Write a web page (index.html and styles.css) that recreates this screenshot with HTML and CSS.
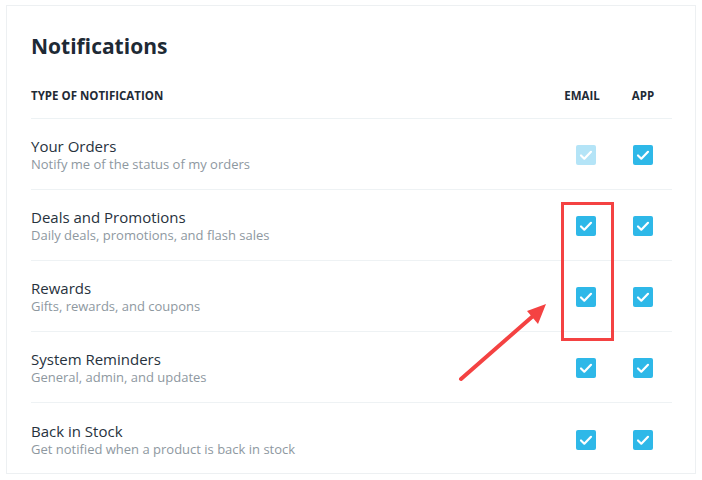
FILE: index.html
```html
<!DOCTYPE html>
<html>
<head>
<meta charset="utf-8">
<link rel="stylesheet" href="styles.css">
</head>
<body>
<div class="card">
  <h1 class="title">Notifications</h1>
  <div class="table">
    <div class="row head">
      <div class="col-type">TYPE OF NOTIFICATION</div>
      <div class="col-email">EMAIL</div>
      <div class="col-app">APP</div>
    </div>
    <div class="row">
      <div class="info"><div class="name">Your Orders</div><div class="desc">Notify me of the status of my orders</div></div>
      <div class="cell"><span class="cb disabled"><svg viewBox="0 0 20 20"><path d="M5 10.5l3.3 3.2L15 6.8"/></svg></span></div>
      <div class="cell"><span class="cb"><svg viewBox="0 0 20 20"><path d="M5 10.5l3.3 3.2L15 6.8"/></svg></span></div>
    </div>
    <div class="row">
      <div class="info"><div class="name">Deals and Promotions</div><div class="desc">Daily deals, promotions, and flash sales</div></div>
      <div class="cell"><span class="cb"><svg viewBox="0 0 20 20"><path d="M5 10.5l3.3 3.2L15 6.8"/></svg></span></div>
      <div class="cell"><span class="cb"><svg viewBox="0 0 20 20"><path d="M5 10.5l3.3 3.2L15 6.8"/></svg></span></div>
    </div>
    <div class="row">
      <div class="info"><div class="name">Rewards</div><div class="desc">Gifts, rewards, and coupons</div></div>
      <div class="cell"><span class="cb"><svg viewBox="0 0 20 20"><path d="M5 10.5l3.3 3.2L15 6.8"/></svg></span></div>
      <div class="cell"><span class="cb"><svg viewBox="0 0 20 20"><path d="M5 10.5l3.3 3.2L15 6.8"/></svg></span></div>
    </div>
    <div class="row">
      <div class="info"><div class="name">System Reminders</div><div class="desc">General, admin, and updates</div></div>
      <div class="cell"><span class="cb"><svg viewBox="0 0 20 20"><path d="M5 10.5l3.3 3.2L15 6.8"/></svg></span></div>
      <div class="cell"><span class="cb"><svg viewBox="0 0 20 20"><path d="M5 10.5l3.3 3.2L15 6.8"/></svg></span></div>
    </div>
    <div class="row">
      <div class="info"><div class="name">Back in Stock</div><div class="desc">Get notified when a product is back in stock</div></div>
      <div class="cell"><span class="cb"><svg viewBox="0 0 20 20"><path d="M5 10.5l3.3 3.2L15 6.8"/></svg></span></div>
      <div class="cell"><span class="cb"><svg viewBox="0 0 20 20"><path d="M5 10.5l3.3 3.2L15 6.8"/></svg></span></div>
    </div>
  </div>
</div>
<svg class="annot" width="702" height="480" viewBox="0 0 702 480">
  <rect x="562.5" y="203.5" width="50" height="136" fill="none" stroke="#f44242" stroke-width="3"/>
  <line x1="461" y1="379" x2="533" y2="316" stroke="#f44242" stroke-width="4" stroke-linecap="round"/>
  <polygon points="546,304 538,324 527,311" fill="#f44242"/>
</svg>
</body>
</html>
```
FILE: styles.css
```css
html, body {
  margin: 0;
  padding: 0;
  background: #ffffff;
}
body {
  font-family: "Open Sans", "Liberation Sans", sans-serif;
  color: #1f2b36;
  position: relative;
  width: 702px;
  height: 480px;
}
.card {
  margin: 5px 0 0 6px;
  border: 1px solid #edf0f2;
  padding: 0 23px 0 24px;
  box-sizing: border-box;
  width: 690px;
  height: 469px;
}
.title {
  margin: 0;
  padding-top: 24px;
  font-size: 21px;
  font-weight: 700;
  color: #1e2a35;
  line-height: 32px;
  letter-spacing: 0;
}
.table {
  margin-top: 25px;
}
.row {
  display: grid;
  grid-template-columns: 1fr 56px 58px;
  align-items: center;
  height: 71px;
  border-bottom: 1px solid #eef2f4;
  box-sizing: border-box;
}
.row:last-child {
  border-bottom: none;
}
.row.head {
  height: 32px;
  padding-top: 2px;
  align-items: start;
  font-size: 11.5px;
  font-weight: 700;
  color: #1f2b36;
  letter-spacing: 0;
  line-height: 14px;
  border-bottom: 1px solid #edf2f4;
}
.col-email {
  text-align: center;
  padding-right: 8px;
}
.col-app {
  text-align: center;
}
.info {
  padding-top: 2px;
}
.name {
  font-size: 15px;
  color: #27323d;
  line-height: 18px;
}
.desc {
  font-size: 13px;
  color: #8e989f;
  line-height: 18px;
}
.cell {
  display: flex;
  justify-content: center;
  padding-top: 2px;
}
.cb {
  width: 20px;
  height: 20px;
  border-radius: 2px;
  background: #2eb8e8;
  display: block;
}
.cb.disabled {
  background: #b4e4f7;
}
.cb svg {
  width: 20px;
  height: 20px;
  display: block;
}
.cb path {
  fill: none;
  stroke: #ffffff;
  stroke-width: 2.2;
  stroke-linecap: round;
  stroke-linejoin: round;
}
.annot {
  position: absolute;
  left: 0;
  top: 0;
  pointer-events: none;
}
```
